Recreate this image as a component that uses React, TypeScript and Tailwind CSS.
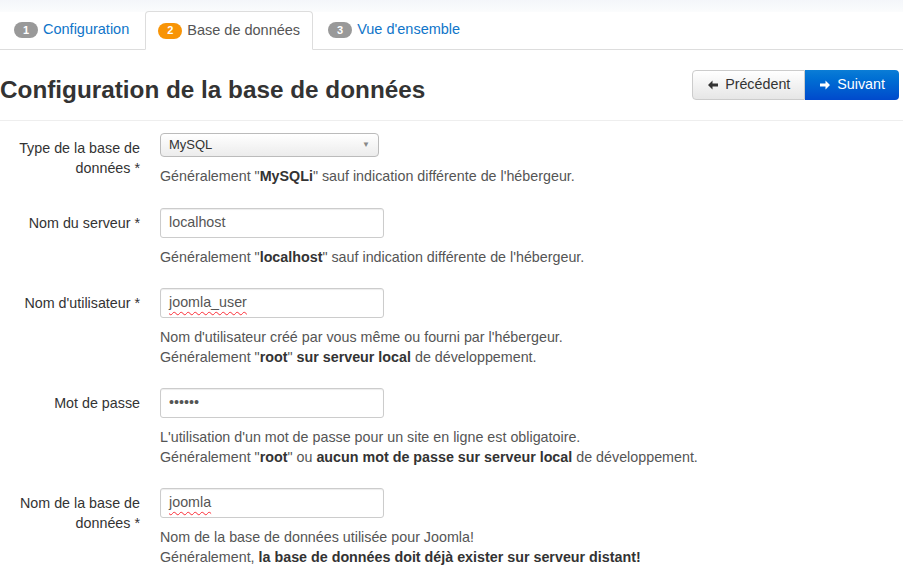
import React from "react";

const Help = ({ children }: { children: React.ReactNode }) => (
  <div className="text-[14.3px] leading-[20px] text-[#555]">{children}</div>
);

const Field = ({ children, squiggle }: { children: React.ReactNode; squiggle?: boolean }) => (
  <div className="w-[224px] h-[30px] border border-[#ccc] rounded-[3px] bg-white flex items-center px-[8px] text-[14.3px] text-[#555] shadow-[inset_0_1px_1px_rgba(0,0,0,0.075)]">
    <span className={squiggle ? "underline decoration-wavy decoration-red-500 decoration-1 underline-offset-4" : ""}>{children}</span>
  </div>
);

const Row = ({ label, field, help, mt }: { label: React.ReactNode; field: React.ReactNode; help: React.ReactNode; mt: string }) => (
  <div className={`flex ${mt}`}>
    <div className="w-[140px] text-right text-[14.3px] leading-[20px] text-[#333] pt-[5px]">{label}</div>
    <div className="ml-[20px] flex flex-col">
      {field}
      <div className="mt-[9px]">{help}</div>
    </div>
  </div>
);

const Arrow = ({ left, color }: { left?: boolean; color: string }) => (
  <svg width="12" height="12" viewBox="0 0 12 12" className="mr-[6px]" style={{ transform: left ? "scaleX(-1)" : undefined }}>
    <path d="M1 4.5h5.5V1.5L11 6l-4.5 4.5V7.5H1z" fill={color} />
  </svg>
);

export default function App() {
  return (
    <div className="w-[903px] h-[575px] overflow-hidden bg-white" style={{ fontFamily: '"Liberation Sans", Arial, sans-serif' }}>
      <div className="h-[12px] bg-gradient-to-b from-[#f4f6fa] to-[#fbfcfd]" />
      <div className="flex items-end border-b border-[#ddd] h-[38px] pl-[2px]">
        <div className="flex items-center h-[38px] px-[12px] mr-[4px] text-[14.5px] text-[#0f75c9]">
          <span className="inline-flex items-center justify-center w-[24px] h-[16px] rounded-full bg-[#999] text-white text-[11px] font-bold mr-[5px]">1</span>Configuration
        </div>
        <div className="flex items-center h-[39px] -mb-px px-[12px] text-[14.5px] text-[#555] bg-white border border-[#ddd] border-b-white rounded-t-[4px]">
          <span className="inline-flex items-center justify-center w-[24px] h-[16px] rounded-full bg-[#f89406] text-white text-[11px] font-bold mr-[5px]">2</span>Base de données
        </div>
        <div className="flex items-center h-[38px] px-[15px] text-[14.5px] text-[#0f75c9]">
          <span className="inline-flex items-center justify-center w-[24px] h-[16px] rounded-full bg-[#999] text-white text-[11px] font-bold mr-[5px]">3</span>Vue d'ensemble
        </div>
      </div>
      <div className="flex items-center justify-between h-[71px] border-b border-[#eee] pr-[4px]">
        <h1 className="text-[24.3px] font-bold text-[#333] pt-[10px]">Configuration de la base de données</h1>
        <div className="flex -mt-[1px]">
          <div className="h-[30px] flex items-center px-[14px] border border-[#ccc] rounded-l-[4px] bg-gradient-to-b from-white to-[#e6e6e6] text-[14.3px] text-[#333]">
            <Arrow left color="#333" />Précédent
          </div>
          <div className="h-[30px] flex items-center px-[14px] rounded-r-[4px] bg-gradient-to-b from-[#0b7dd6] to-[#0049cc] text-[14.3px] text-white">
            <Arrow color="#fff" />Suivant
          </div>
        </div>
      </div>
      <div className="mt-[12px]">
        <Row
          mt="mt-0"
          label={<>Type de la base de<br />données *</>}
          field={
            <div className="w-[219px] h-[24px] border border-[#bbb] rounded-[4px] bg-gradient-to-b from-white to-[#ececec] flex items-center justify-between px-[8px] text-[13px] text-[#333]">
              MySQL<span className="text-[8px] text-[#888]">▼</span>
            </div>
          }
          help={<Help>Généralement "<b className="text-[#333]">MySQLi</b>" sauf indication différente de l'hébergeur.</Help>}
        />
        <Row mt="mt-[22px]" label="Nom du serveur *" field={<Field>localhost</Field>}
          help={<Help>Généralement "<b className="text-[#333]">localhost</b>" sauf indication différente de l'hébergeur.</Help>} />
        <Row mt="mt-[21px]" label="Nom d'utilisateur *" field={<Field squiggle>joomla_user</Field>}
          help={<Help>Nom d'utilisateur créé par vous même ou fourni par l'hébergeur.<br />Généralement "<b className="text-[#333]">root</b>" <b className="text-[#333]">sur serveur local</b> de développement.</Help>} />
        <Row mt="mt-[21px]" label="Mot de passe" field={<Field>••••••</Field>}
          help={<Help>L'utilisation d'un mot de passe pour un site en ligne est obligatoire.<br />Généralement "<b className="text-[#333]">root</b>" ou <b className="text-[#333]">aucun mot de passe sur serveur local</b> de développement.</Help>} />
        <Row mt="mt-[21px]" label={<>Nom de la base de<br />données *</>} field={<Field squiggle>joomla</Field>}
          help={<Help>Nom de la base de données utilisée pour Joomla!<br />Généralement, <b className="text-[#333]">la base de données doit déjà exister sur serveur distant!</b></Help>} />
      </div>
    </div>
  );
}
